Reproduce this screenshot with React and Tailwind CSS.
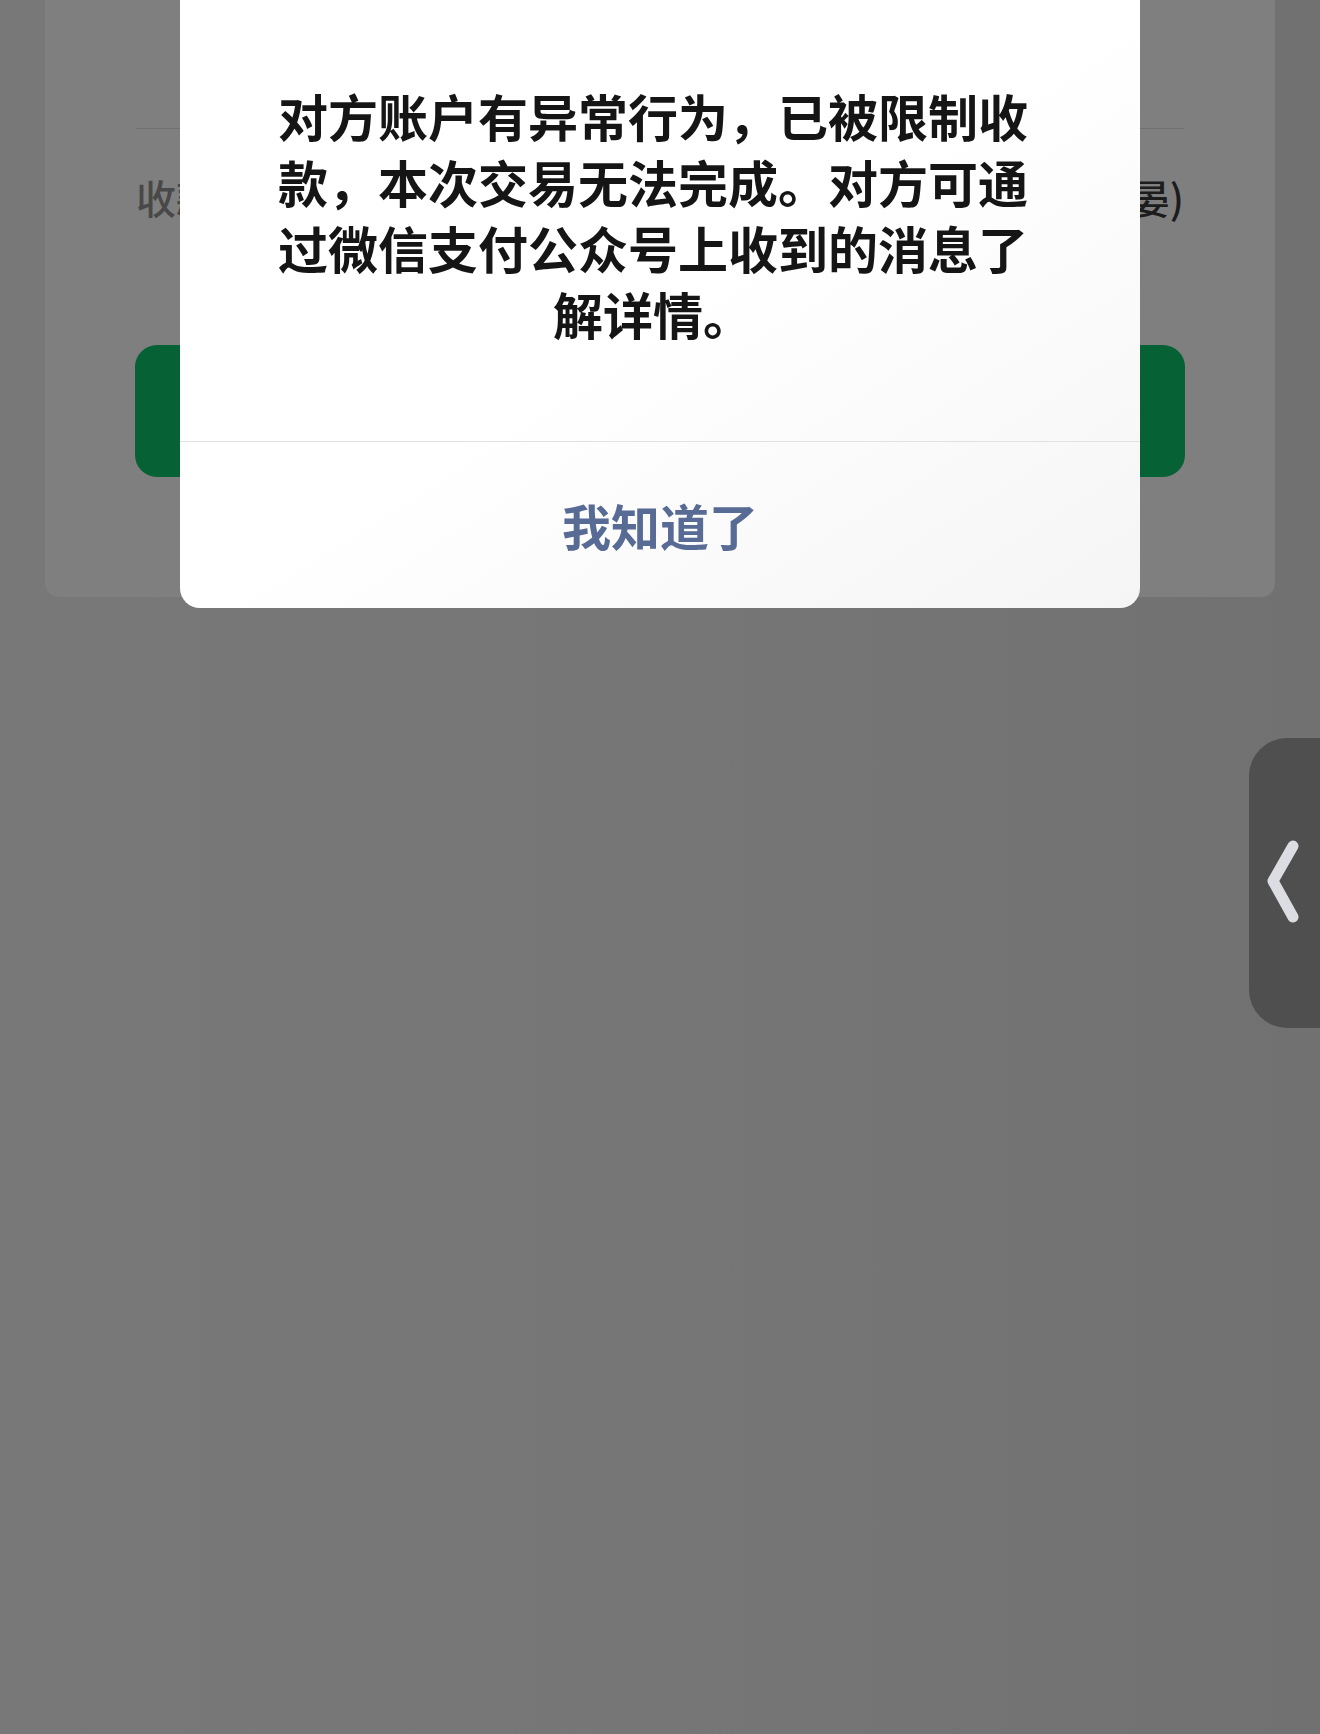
import React from 'react';

const cjk = { fontFamily: '"Noto Sans CJK SC", "Noto Sans", sans-serif' };

export default function App() {
  return (
    <div
      className="relative min-h-[1734px] w-[1320px] overflow-hidden bg-gradient-to-r from-[#787878] via-[#767676] to-[#717171]"
      style={cjk}
    >
      {/* Underlying page card (dimmed) */}
      <div className="mx-[45px] rounded-b-[14px] bg-[#7f7f7f] pt-[128px] pb-[120px]">
        <div className="mx-[91px] border-t border-[#707070]" />
        <div className="mx-[91px] mt-[40px] flex h-[56px] items-center justify-between">
          <span className="text-[40px] font-medium leading-[56px] text-[#484848]">收款方</span>
          <span className="text-[40px] font-medium leading-[56px] text-[#1c1c1c]">(*晏)</span>
        </div>
        <div className="mx-[90px] mt-[120px] h-[132px] rounded-[22px] bg-[#066134]" />
      </div>

      {/* Alert dialog */}
      <div className="absolute left-[180px] top-0 w-[960px] rounded-b-[20px] bg-gradient-to-br from-white via-white to-[#f5f5f5]">
        <div className="flex justify-center pt-[82px] pb-[95px] pr-[14px]">
          <p className="w-[770px] text-center text-[50px] font-bold leading-[66px] text-[#151515]">
            对方账户有异常行为，已被限制收款，本次交易无法完成。对方可通过微信支付公众号上收到的消息了解详情。
          </p>
        </div>
        <div className="border-t border-[#e2e2e2]" />
        <div className="flex h-[166px] items-center justify-center">
          <span className="text-[49px] font-bold text-[#576b95]">我知道了</span>
        </div>
      </div>

      {/* Floating side handle */}
      <div className="absolute right-0 top-[738px] flex h-[290px] w-[71px] items-center rounded-l-[38px] bg-[#4f4f4f]">
        <svg width="71" height="290" viewBox="0 0 71 290" className="block">
          <path
            d="M44 108 L24 143 L44 179"
            fill="none"
            stroke="#dcdce3"
            strokeWidth="11"
            strokeLinecap="round"
            strokeLinejoin="round"
          />
        </svg>
      </div>
    </div>
  );
}
